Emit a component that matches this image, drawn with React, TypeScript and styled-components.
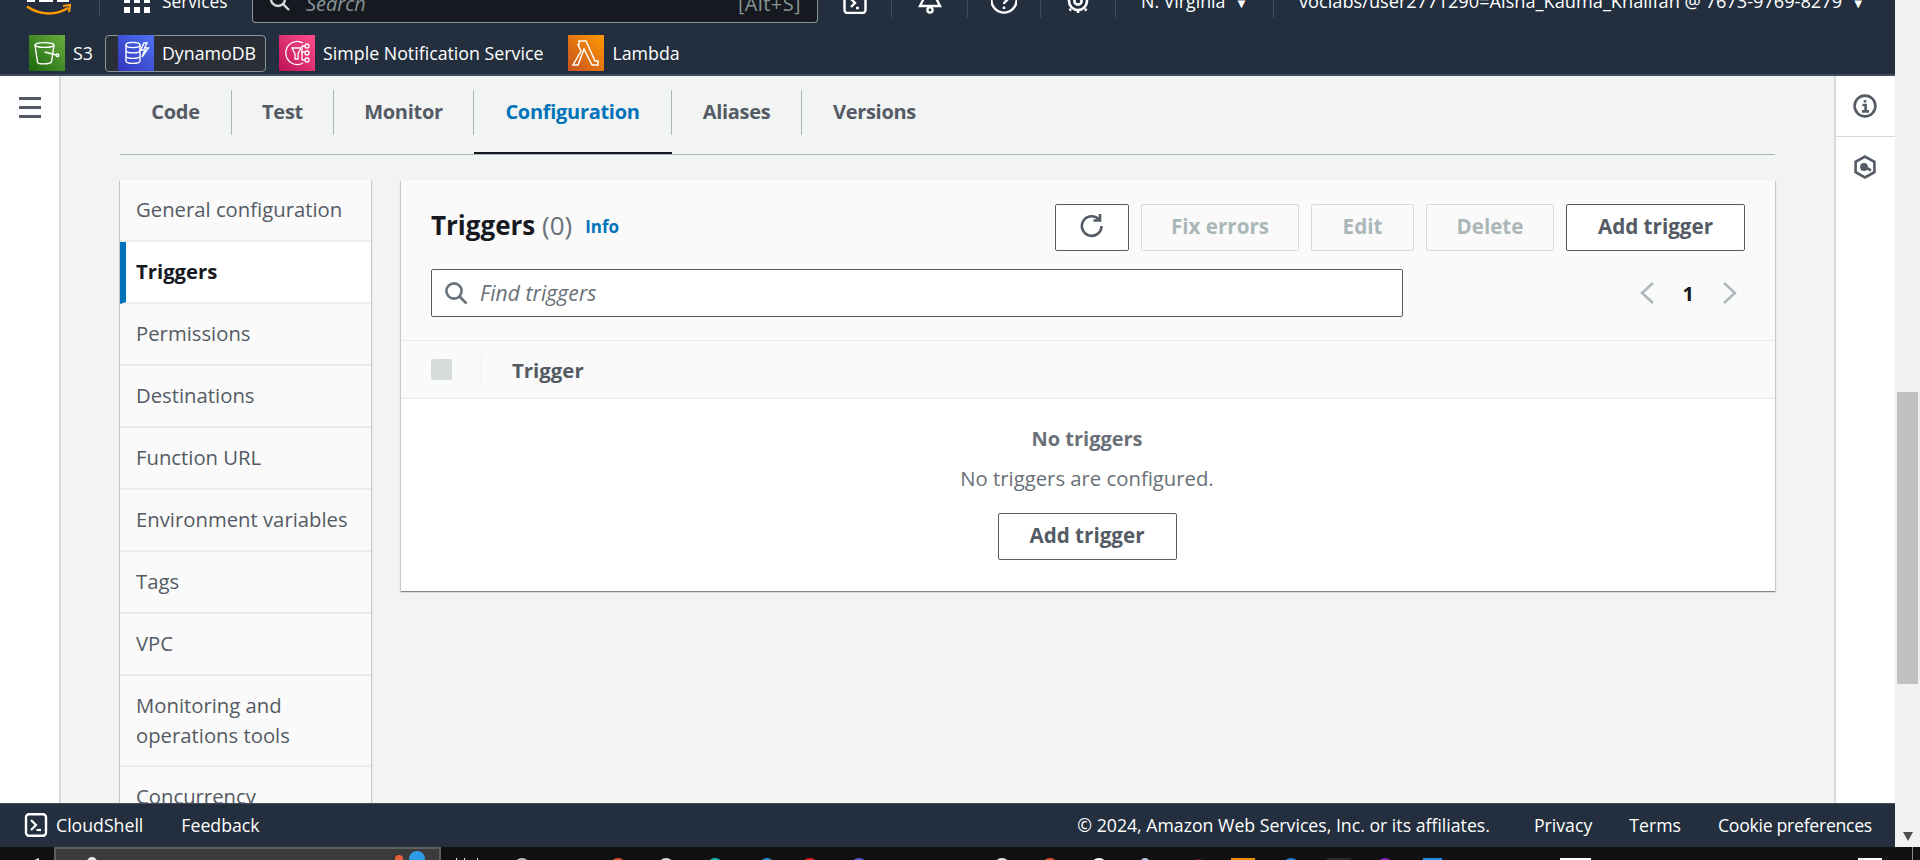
import { createGlobalStyle, styled } from 'styled-components';

const GlobalStyle = createGlobalStyle`
  html, body {
    margin: 0;
    padding: 0;
    overflow: hidden;
    background: #f1f1f1;
  }
  * {
    box-sizing: border-box;
  }
`;

const FONT = `"Open Sans", "Noto Sans", "Liberation Sans", sans-serif`;

const sideItems = [
  'General configuration',
  'Triggers',
  'Permissions',
  'Destinations',
  'Function URL',
  'Environment variables',
  'Tags',
  'VPC',
  'Monitoring and operations tools',
  'Concurrency',
];

const tabs = [
  { label: 'Code', width: 112 },
  { label: 'Test', width: 102 },
  { label: 'Monitor', width: 140 },
  { label: 'Configuration', width: 198, active: true },
  { label: 'Aliases', width: 130 },
  { label: 'Versions', width: 145, last: true },
];

// what shows of the taskbar icons under the browser window
const taskIcons = [
  { x: 87, w: 10, c: '#e8e8e8', top: 10, round: true, onSearch: true },
  { x: 395, w: 8, c: '#e8603c', top: 8, round: true, onSearch: true },
  { x: 409, w: 16, c: '#2f9be8', top: 4, round: true, onSearch: true },
  { x: 456, w: 1, c: '#e8e8e8', top: 11 },
  { x: 464, w: 1, c: '#e8e8e8', top: 11 },
  { x: 477, w: 1, c: '#e8e8e8', top: 11 },
  { x: 514, w: 16, c: '#bdbdbd', top: 11, round: true },
  { x: 610, w: 16, c: '#e8502a', top: 11, round: true },
  { x: 658, w: 16, c: '#d8d8d8', top: 11, round: true },
  { x: 707, w: 16, c: '#1fb6b6', top: 11, round: true },
  { x: 760, w: 14, c: '#2f8fd8', top: 11, round: true },
  { x: 802, w: 16, c: '#e02020', top: 11, round: true },
  { x: 851, w: 16, c: '#5b5fd6', top: 11, round: true },
  { x: 994, w: 16, c: '#e8e8e8', top: 11, round: true },
  { x: 1042, w: 16, c: '#e8502a', top: 11, round: true },
  { x: 1091, w: 16, c: '#ffffff', top: 11, round: true },
  { x: 1140, w: 10, c: '#a9c8e8', top: 11, round: true },
  { x: 1194, w: 10, c: '#7a2020', top: 12, round: true },
  { x: 1231, w: 24, c: '#f08c00', top: 11 },
  { x: 1283, w: 16, c: '#1c86d8', top: 11, round: true },
  { x: 1327, w: 24, c: '#2a2a2e', top: 11 },
  { x: 1377, w: 16, c: '#8a1fc0', top: 11, round: true },
  { x: 1423, w: 19, c: '#1f8ae0', top: 11 },
  { x: 1560, w: 31, c: '#ffffff', top: 11 },
  { x: 1858, w: 24, c: '#ffffff', top: 11 },
  { x: 1912, w: 1, c: '#8a8a8a', top: 0 },
];

const searchIcons = taskIcons.filter((icon) => icon.onSearch);
const barIcons = taskIcons.filter((icon) => !icon.onSearch);

export default function App() {
  return (
    <>
      <GlobalStyle />
      <Screen>
        <Browser>
          <Console>
            <Header>
              <TopRow>
                <Logo>
                  <svg width="50" height="17" viewBox="0 0 50 17">
                    <path d="M3 0h8M15 0h14M33 0h12" stroke="#fff" strokeWidth="4" />
                    <path d="M3 6.5c13 9 29 9 41 1.5" fill="none" stroke="#f90" strokeWidth="2.6" />
                    <path d="M39 6l7-1-1 7" fill="none" stroke="#f90" strokeWidth="2.2" />
                  </svg>
                </Logo>
                <ServicesButton>
                  <GridIcon>
                    {Array.from({ length: 9 }).map((_, i) => (
                      <i key={i} />
                    ))}
                  </GridIcon>
                  <ServicesLabel>Services</ServicesLabel>
                </ServicesButton>
                <SearchBox>
                  <svg width="22" height="22" viewBox="0 0 22 22" fill="none" stroke="#d5dbdb" strokeWidth="2.4">
                    <circle cx="9" cy="9" r="7" />
                    <path d="M14 14l6 6" />
                  </svg>
                  <SearchHint>Search</SearchHint>
                  <SearchKey>[Alt+S]</SearchKey>
                </SearchBox>
                <TopIcon $width={74}>
                  <svg width="24" height="24" viewBox="0 0 24 24" fill="none" stroke="#fff" strokeWidth="2.4">
                    <rect x="1.5" y="-4" width="21" height="27" rx="3" />
                    <path d="M8 9l4 4-4 4M13 18h3" />
                  </svg>
                </TopIcon>
                <TopIcon $width={76}>
                  <svg width="24" height="24" viewBox="0 0 24 24" fill="none" stroke="#fff" strokeWidth="2.4">
                    <path d="M12 -2c4 0 5 4 5 8l5 10H2l5-10c0-4 1-8 5-8z" />
                    <circle cx="12" cy="20" r="2.6" />
                  </svg>
                </TopIcon>
                <TopIcon $width={73}>
                  <svg width="26" height="24" viewBox="0 0 26 24" fill="none" stroke="#fff" strokeWidth="2.4">
                    <circle cx="13" cy="10" r="12.6" />
                    <path d="M9 7c0-3 8-3 8 1 0 3-4 3-4 6M13 16.5v2.5" />
                  </svg>
                </TopIcon>
                <TopIcon $width={75}>
                  <svg width="24" height="24" viewBox="0 0 24 24" fill="none" stroke="#fff" strokeWidth="2.6">
                    <circle cx="12" cy="11" r="9" />
                    <circle cx="12" cy="11" r="3.6" />
                    <path d="M5 19l-1.5 1.5M19 19l1.5 1.5M12 20v3" />
                  </svg>
                </TopIcon>
                <RegionMenu>
                  N. Virginia <Caret>▼</Caret>
                </RegionMenu>
                <AccountMenu>
                  voclabs/user2771290=Aisha_Kauma_Khalifan @ 7673-9769-8279 <Caret>▼</Caret>
                </AccountMenu>
              </TopRow>
              <FavRow>
                <Fav>
                  <FavIcon $from="#6aae3c" $to="#1b660f">
                    <svg width="36" height="36" viewBox="0 0 36 36" fill="none" stroke="#fff" strokeWidth="1.4">
                      <ellipse cx="15.5" cy="10" rx="9.5" ry="2.4" />
                      <path d="M6 10l2.5 17c0 2.5 12 2.5 14 0L25 10" />
                      <path d="M15.5 17l12 3" />
                      <circle cx="28.5" cy="20.3" r="1.3" />
                    </svg>
                  </FavIcon>
                  S3
                </Fav>
                <Fav $selected>
                  <FavIcon $from="#4d72f3" $to="#3334b9">
                    <svg width="36" height="36" viewBox="0 0 36 36" fill="none" stroke="#fff" strokeWidth="1.4">
                      <ellipse cx="15" cy="10" rx="7" ry="2.6" />
                      <path d="M8 10v16c0 3.2 14 3.2 14 0V10M8 15.5c0 3.2 14 3.2 14 0M8 21c0 3.2 14 3.2 14 0" />
                      <path d="M26 8l-3.5 7h4.5l-3 7 6.5-9h-4l2.5-5z" />
                    </svg>
                  </FavIcon>
                  DynamoDB
                </Fav>
                <Fav>
                  <FavIcon $from="#ff4f8b" $to="#bc1356">
                    <svg width="36" height="36" viewBox="0 0 36 36" fill="none" stroke="#fff" strokeWidth="1.3">
                      <path d="M24 8A11.5 11.5 0 1 0 24 28" />
                      <path d="M13 13h9l-3 6v5h-3v-5z" />
                      <path d="M22 17h4M23 11h3M23 25h3M23 11v14" />
                      <circle cx="28" cy="11" r="2" />
                      <circle cx="28" cy="18" r="2" />
                      <circle cx="28" cy="25" r="2" />
                    </svg>
                  </FavIcon>
                  Simple Notification Service
                </Fav>
                <Fav>
                  <FavIcon $from="#f90" $to="#c7511f">
                    <svg width="36" height="36" viewBox="0 0 36 36" fill="none" stroke="#fff" strokeWidth="1.5">
                      <path d="M11 6h7l9 20h3v4h-6L16 14 10 30H5l8-14-3-6h1z" />
                    </svg>
                  </FavIcon>
                  Lambda
                </Fav>
              </FavRow>
            </Header>

            <Body>
              <LeftRail>
                <Burger>
                  <i />
                  <i />
                  <i />
                </Burger>
              </LeftRail>

              <Main>
                <TabBar>
                  {tabs.map((tab) => (
                    <Tab key={tab.label} $width={tab.width} $active={tab.active} $last={tab.last}>
                      <span>{tab.label}</span>
                    </Tab>
                  ))}
                </TabBar>

                <Columns>
                  <SideNav>
                    {sideItems.map((item, i) => (
                      <SideItem key={item} $active={i === 1}>
                        {item}
                      </SideItem>
                    ))}
                  </SideNav>

                  <Panel>
                    <PanelHead>
                      <TitleRow>
                        <Title>
                          Triggers <Count>(0)</Count>
                        </Title>
                        <InfoLink>Info</InfoLink>
                        <Actions>
                          <ActionButton $width={74}>
                            <svg width="28" height="28" viewBox="0 0 28 28" fill="none" stroke="#545b64" strokeWidth="2.6">
                              <path d="M21 7.5A9.8 9.8 0 1 0 23.5 14" />
                              <path d="M22 2v6.5h-6.5" />
                            </svg>
                          </ActionButton>
                          <ActionButton $width={158} $disabled>
                            Fix errors
                          </ActionButton>
                          <ActionButton $width={103} $disabled>
                            Edit
                          </ActionButton>
                          <ActionButton $width={128} $disabled>
                            Delete
                          </ActionButton>
                          <ActionButton $width={179}>Add trigger</ActionButton>
                        </Actions>
                      </TitleRow>
                      <FilterRow>
                        <FilterBox>
                          <svg width="24" height="24" viewBox="0 0 24 24" fill="none" stroke="#687078" strokeWidth="2.6">
                            <circle cx="10" cy="10" r="7.6" />
                            <path d="M15.5 15.5l7 7" />
                          </svg>
                          <FilterHint>Find triggers</FilterHint>
                        </FilterBox>
                        <Pager>
                          <svg width="16" height="24" viewBox="0 0 16 24" fill="none" stroke="#aab7b8" strokeWidth="2.4">
                            <path d="M14 2L3 12l11 10" />
                          </svg>
                          <PageNumber>1</PageNumber>
                          <svg width="16" height="24" viewBox="0 0 16 24" fill="none" stroke="#aab7b8" strokeWidth="2.4">
                            <path d="M2 2l11 10L2 22" />
                          </svg>
                        </Pager>
                      </FilterRow>
                    </PanelHead>
                    <TableHead>
                      <CheckBox />
                      <HeadSeparator />
                      <HeadLabel>Trigger</HeadLabel>
                    </TableHead>
                    <EmptyState>
                      <EmptyTitle>No triggers</EmptyTitle>
                      <EmptyText>No triggers are configured.</EmptyText>
                      <ActionButton $width={179}>Add trigger</ActionButton>
                    </EmptyState>
                  </Panel>
                </Columns>
              </Main>

              <RightRail>
                <RailCell $divided>
                  <svg width="24" height="24" viewBox="0 0 24 24" fill="none" stroke="#545b64" strokeWidth="2.6">
                    <circle cx="12" cy="12" r="10.4" />
                    <path d="M12 6v2.4M9.5 11H12.6v6M9 17.4h7" />
                  </svg>
                </RailCell>
                <RailCell>
                  <svg width="24" height="24" viewBox="0 0 24 24" fill="none" stroke="#545b64" strokeWidth="2.6">
                    <path d="M12 1.6l9.4 5.2v10.4L12 22.4l-9.4-5.2V6.8z" />
                    <circle cx="11" cy="12" r="2.6" fill="#545b64" />
                    <path d="M12 12l6 3.4" />
                  </svg>
                </RailCell>
              </RightRail>
            </Body>

            <Footer>
              <FooterGroup>
                <ShellLink>
                  <svg width="24" height="24" viewBox="0 0 24 24" fill="none" stroke="#fff">
                    <rect x="2" y="1.2" width="20" height="21.6" rx="3" strokeWidth="2.4" />
                    <path d="M7 7l5 5-5 5" strokeWidth="2.2" />
                    <path d="M12.5 17h4.5" strokeWidth="2.2" />
                  </svg>
                  CloudShell
                </ShellLink>
                <FooterLink>Feedback</FooterLink>
              </FooterGroup>
              <FooterLegal>
                <Copyright>© 2024, Amazon Web Services, Inc. or its affiliates.</Copyright>
                <FooterLink>Privacy</FooterLink>
                <FooterLink>Terms</FooterLink>
                <CookieLink>Cookie preferences</CookieLink>
              </FooterLegal>
            </Footer>
          </Console>

          <Scrollbar>
            <ScrollThumb />
            <ScrollArrow />
          </Scrollbar>
        </Browser>

        <Taskbar>
          <StartArrow />
          <TaskSearch>
            {searchIcons.map((icon) => (
              <TaskIcon key={icon.x} $left={icon.x - 56} $w={icon.w} $c={icon.c} $top={icon.top - 2} $round={icon.round} />
            ))}
          </TaskSearch>
          {barIcons.map((icon) => (
            <TaskIcon key={icon.x} $left={icon.x} $w={icon.w} $c={icon.c} $top={icon.top} $round={icon.round} />
          ))}
        </Taskbar>
      </Screen>
    </>
  );
}

const Screen = styled.div`
  width: 1920px;
  height: 860px;
  display: flex;
  flex-direction: column;
  overflow: hidden;
  font-family: ${FONT};
`;

const Browser = styled.div`
  display: flex;
  height: 847px;
`;

const Console = styled.div`
  width: 1895px;
  display: flex;
  flex-direction: column;
`;

const Header = styled.header`
  height: 76px;
  flex: none;
  background: #232f3e;
  border-bottom: 2px solid #414d5c;
  color: #fff;
`;

const TopRow = styled.div`
  height: 23px;
  display: flex;
  align-items: flex-start;
  overflow: hidden;
`;

const Logo = styled.div`
  width: 100px;
  height: 17px;
  padding-left: 24px;
  flex: none;
  border-right: 1px solid #414d5c;
`;

const ServicesButton = styled.div`
  width: 152px;
  height: 13px;
  flex: none;
  display: flex;
  align-items: flex-end;
  gap: 12px;
  padding-left: 24px;
`;

const GridIcon = styled.div`
  display: grid;
  grid-template-columns: repeat(3, 6px);
  gap: 4px;
  flex: none;

  i {
    display: block;
    width: 6px;
    height: 6px;
    background: #fff;
  }
`;

const ServicesLabel = styled.span`
  font-size: 17.3px;
  line-height: 12px;
  margin-bottom: 5px;
`;

const SearchBox = styled.div`
  width: 566px;
  height: 23px;
  flex: none;
  display: flex;
  align-items: flex-end;
  gap: 15px;
  padding: 0 16px 0;
  background: #16191f;
  border: 1px solid #879596;
  border-top: none;
  border-radius: 0 0 4px 4px;

  svg {
    margin-bottom: 10px;
  }
`;

const SearchHint = styled.span`
  flex: 1;
  margin-bottom: 12px;
  font-style: italic;
  font-size: 20px;
  line-height: 12px;
  color: #879596;
`;

const SearchKey = styled.span`
  margin-bottom: 12px;
  font-size: 20px;
  line-height: 12px;
  letter-spacing: 0.4px;
  color: #879596;
`;

const TopIcon = styled.div<{ $width: number }>`
  width: ${(p) => p.$width}px;
  height: 18px;
  flex: none;
  display: flex;
  align-items: flex-end;
  justify-content: center;
  padding-bottom: 4px;
  border-right: 1px solid #414d5c;

  svg {
    flex: none;
  }
`;

const RegionMenu = styled.div`
  width: 158px;
  height: 18px;
  flex: none;
  padding-left: 25px;
  font-size: 17.8px;
  line-height: 3px;
  white-space: nowrap;
  border-right: 1px solid #414d5c;
`;

const AccountMenu = styled.div`
  flex: none;
  padding-left: 25px;
  height: 23px;
  font-size: 18.2px;
  line-height: 3px;
  white-space: nowrap;
`;

const Caret = styled.span`
  font-size: 13px;
  margin-left: 5px;
`;

const FavRow = styled.div`
  height: 51px;
  display: flex;
  align-items: center;
  padding: 9px 0 0 16px;
`;

const Fav = styled.div<{ $selected?: boolean }>`
  height: 37px;
  display: flex;
  align-items: center;
  gap: 8px;
  font-size: 17.8px;
  white-space: nowrap;
  padding: 0 ${(p) => (p.$selected ? 9 : 11)}px 0 12px;
  border-radius: 4px;
  border: 1px solid ${(p) => (p.$selected ? '#879596' : 'transparent')};
  background: ${(p) => (p.$selected ? '#2a2e36' : 'transparent')};
`;

const FavIcon = styled.div<{ $from: string; $to: string }>`
  width: 36px;
  height: 36px;
  flex: none;
  background: linear-gradient(45deg, ${(p) => p.$to}, ${(p) => p.$from});

  svg {
    display: block;
  }
`;

const Body = styled.div`
  flex: 1;
  min-height: 0;
  display: flex;
  overflow: hidden;
`;

const LeftRail = styled.div`
  width: 61px;
  flex: none;
  background: #fff;
  border-right: 2px solid #d5dbdb;
  padding: 21px 0 0 19px;
`;

const Burger = styled.div`
  display: flex;
  flex-direction: column;
  gap: 6px;

  i {
    display: block;
    width: 22px;
    height: 3px;
    background: #545b64;
  }
`;

const Main = styled.main`
  width: 1773px;
  flex: none;
  background: #f2f3f3;
  padding-left: 59px;
  overflow: hidden;
`;

const TabBar = styled.nav`
  width: 1655px;
  height: 79px;
  display: flex;
  border-bottom: 1px solid #aab7b8;
`;

const Tab = styled.div<{ $width: number; $active?: boolean; $last?: boolean }>`
  width: ${(p) => p.$width}px;
  height: 78px;
  padding-top: 14px;
  border-bottom: 2px solid ${(p) => (p.$active ? '#16191f' : 'transparent')};
  font-size: 20px;
  font-weight: 700;
  letter-spacing: -0.3px;
  color: ${(p) => (p.$active ? '#0073bb' : '#545b64')};

  span {
    display: flex;
    align-items: center;
    justify-content: center;
    height: 45px;
    padding-bottom: 2px;
    border-right: ${(p) => (p.$last ? 'none' : '1px solid #aab7b8')};
  }
`;

const Columns = styled.div`
  display: flex;
  align-items: flex-start;
  gap: 30px;
  padding-top: 25px;
`;

const SideNav = styled.div`
  width: 251px;
  flex: none;
  background: #fafafa;
  box-shadow: 0 1px 1px 0 rgba(0, 28, 36, 0.3), 1px 1px 1px 0 rgba(0, 28, 36, 0.15),
    -1px 1px 1px 0 rgba(0, 28, 36, 0.15);
`;

const SideItem = styled.div<{ $active?: boolean }>`
  min-height: 62px;
  padding: 14px 16px 15px ${(p) => (p.$active ? '10px' : '16px')};
  font-size: 20.3px;
  line-height: 30px;
  font-weight: ${(p) => (p.$active ? 700 : 400)};
  color: ${(p) => (p.$active ? '#16191f' : '#545b64')};
  background: ${(p) => (p.$active ? '#fff' : 'transparent')};
  border-left: ${(p) => (p.$active ? '6px solid #0073bb' : 'none')};
  border-bottom: 2px solid #eaeded;
`;

const Panel = styled.section`
  width: 1374px;
  flex: none;
  height: 411px;
  display: flex;
  flex-direction: column;
  background: #fff;
  box-shadow: 0 1px 1px 0 rgba(0, 28, 36, 0.3), 1px 1px 1px 0 rgba(0, 28, 36, 0.15),
    -1px 1px 1px 0 rgba(0, 28, 36, 0.15);
`;

const PanelHead = styled.div`
  height: 161px;
  flex: none;
  padding: 24px 30px 0;
  background: #fafafa;
  border-bottom: 1px solid #eaeded;
`;

const TitleRow = styled.div`
  display: flex;
  align-items: center;
  height: 47px;
`;

const Title = styled.h2`
  margin: 0 0 6px;
  font-size: 26px;
  font-weight: 700;
  color: #16191f;
`;

const Count = styled.span`
  font-weight: 400;
  color: #687078;
`;

const InfoLink = styled.a`
  margin: 0 0 2px 13px;
  font-size: 17px;
  font-weight: 700;
  color: #0073bb;
`;

const Actions = styled.div`
  margin-left: auto;
  display: flex;
  gap: 12px;
`;

const ActionButton = styled.button<{ $width: number; $disabled?: boolean }>`
  width: ${(p) => p.$width}px;
  height: 47px;
  display: flex;
  align-items: center;
  justify-content: center;
  padding: 0 0 3px;
  font-family: ${FONT};
  font-size: 20.6px;
  font-weight: 700;
  border-radius: 2px;
  background: ${(p) => (p.$disabled ? '#fafafa' : '#fff')};
  color: ${(p) => (p.$disabled ? '#aab7b8' : '#545b64')};
  border: 1px solid ${(p) => (p.$disabled ? '#d5dbdb' : '#545b64')};
`;

const FilterRow = styled.div`
  display: flex;
  align-items: center;
  justify-content: space-between;
  margin-top: 18px;
`;

const FilterBox = styled.div`
  width: 972px;
  height: 48px;
  display: flex;
  align-items: center;
  gap: 12px;
  padding: 0 0 1px 12px;
  background: #fff;
  border: 1px solid #545b64;
  border-radius: 2px;
`;

const FilterHint = styled.span`
  font-size: 21px;
  font-style: italic;
  letter-spacing: 0.1px;
  color: #687078;
`;

const Pager = styled.div`
  display: flex;
  align-items: center;
  gap: 28px;
  margin-right: 7px;
`;

const PageNumber = styled.span`
  font-size: 20px;
  font-weight: 700;
  color: #16191f;
`;

const TableHead = styled.div`
  height: 58px;
  flex: none;
  display: flex;
  align-items: center;
  padding-left: 30px;
  background: #fafafa;
  border-bottom: 1px solid #eaeded;
`;

const CheckBox = styled.div`
  width: 21px;
  height: 21px;
  border-radius: 2px;
  background: #d5dbdb;
`;

const HeadSeparator = styled.div`
  width: 1px;
  height: 30px;
  margin: 0 30px 0 29px;
  background: #eaeded;
`;

const HeadLabel = styled.span`
  font-size: 20.4px;
  font-weight: 700;
  color: #545b64;
`;

const EmptyState = styled.div`
  flex: 1;
  display: flex;
  flex-direction: column;
  align-items: center;
  padding: 25px 2px 0 0;
  color: #687078;
`;

const EmptyTitle = styled.div`
  height: 30px;
  line-height: 30px;
  font-size: 20px;
  font-weight: 700;
`;

const EmptyText = styled.div`
  height: 30px;
  margin: 9px 0 20px;
  line-height: 30px;
  font-size: 20.3px;
`;

const RightRail = styled.aside`
  width: 61px;
  flex: none;
  background: #fff;
  border-left: 2px solid #d5dbdb;
`;

const RailCell = styled.div<{ $divided?: boolean }>`
  height: ${(p) => (p.$divided ? 61 : 60)}px;
  display: flex;
  align-items: center;
  justify-content: center;
  padding-right: 2px;
  border-bottom: ${(p) => (p.$divided ? '1px solid #d5dbdb' : 'none')};
`;

const Footer = styled.footer`
  height: 44px;
  flex: none;
  display: flex;
  align-items: center;
  justify-content: space-between;
  padding: 0 23px 2px 24px;
  background: #232f3e;
  border-top: 1px solid #414d5c;
  color: #fff;
  font-size: 17.7px;
`;

const FooterGroup = styled.div`
  display: flex;
  align-items: center;
  gap: 38px;
`;

const ShellLink = styled.div`
  display: flex;
  align-items: center;
  gap: 8px;
`;

const FooterLink = styled.span``;

const CookieLink = styled.span`
  letter-spacing: -0.3px;
`;

const Copyright = styled.span`
  margin-right: 7px;
`;

const FooterLegal = styled.div`
  display: flex;
  align-items: center;
  gap: 37px;
`;

const Scrollbar = styled.div`
  width: 25px;
  flex: none;
  display: flex;
  flex-direction: column;
  align-items: center;
  padding-top: 392px;
  background: #f1f1f1;
`;

const ScrollThumb = styled.div`
  width: 21px;
  height: 292px;
  background: #c1c1c1;
`;

const ScrollArrow = styled.div`
  margin-top: auto;
  margin-bottom: 6px;
  width: 0;
  height: 0;
  border-left: 5px solid transparent;
  border-right: 5px solid transparent;
  border-top: 9px solid #505050;
`;

const Taskbar = styled.div`
  height: 13px;
  flex: none;
  position: relative;
  background: #111;
  overflow: hidden;
`;

const StartArrow = styled.div`
  position: absolute;
  left: 25px;
  top: 11px;
  width: 0;
  height: 0;
  border-left: 14px solid transparent;
  border-bottom: 6px solid #eee;
`;

const TaskSearch = styled.div`
  position: absolute;
  left: 54px;
  top: 0;
  width: 387px;
  height: 13px;
  background: #3b3b3b;
  border: 2px solid #5f5f5f;
  border-bottom: none;
`;

const TaskIcon = styled.div<{ $left: number; $w: number; $c: string; $top: number; $round?: boolean }>`
  position: absolute;
  left: ${(p) => p.$left}px;
  top: ${(p) => p.$top}px;
  width: ${(p) => p.$w}px;
  height: ${(p) => (p.$round ? p.$w : 16)}px;
  border-radius: ${(p) => (p.$round ? '50%' : '0')};
  background: ${(p) => p.$c};
`;
